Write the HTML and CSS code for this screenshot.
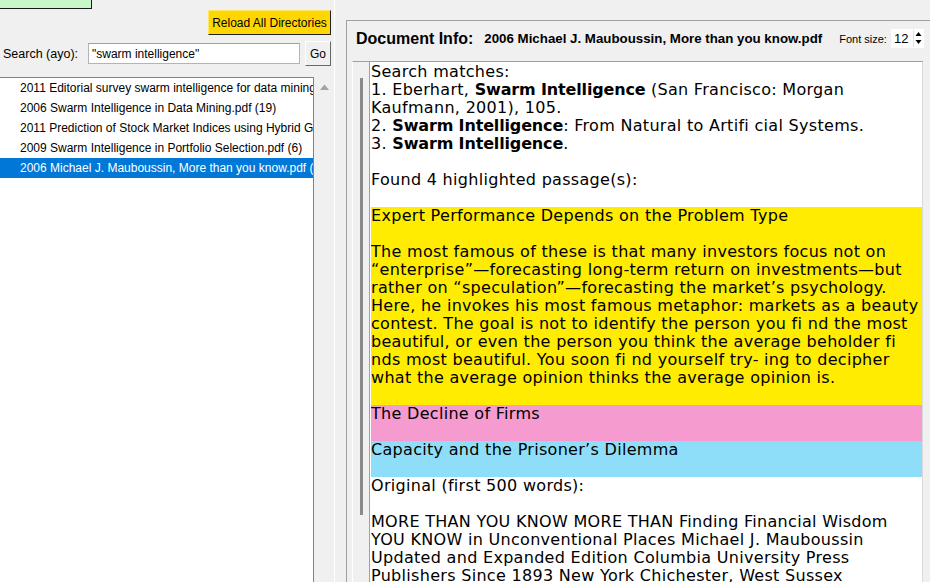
FILE: index.html
```html
<!DOCTYPE html>
<html lang="en">
<head>
  <meta charset="UTF-8">
  <title>PDF Highlight Browser</title>
  <link rel="stylesheet" href="styles.css">
</head>
<body>
  <div class="app">

    <!-- Left: directories + search + file list -->
    <div class="left">
      <div class="tree-btn"><span>Load tree</span></div>

      <div class="reload-row">
        <button class="reload-btn">Reload All Directories</button>
      </div>

      <div class="search-row">
        <label class="search-label">Search (ayo):</label>
        <input class="search-input" type="text" value="&quot;swarm intelligence&quot;">
        <button class="go-btn">Go</button>
      </div>

      <div class="list-wrap">
        <ul class="file-list">
          <li>2011 Editorial survey swarm intelligence for data mining.pdf (4)</li>
          <li>2006 Swarm Intelligence in Data Mining.pdf (19)</li>
          <li>2011 Prediction of Stock Market Indices using Hybrid Genetic Algorithm.pdf (2)</li>
          <li>2009 Swarm Intelligence in Portfolio Selection.pdf (6)</li>
          <li class="selected">2006 Michael J. Mauboussin, More than you know.pdf (3)</li>
        </ul>
        <div class="list-scroll">
          <svg width="9" height="6" viewBox="0 0 9 6"><polygon points="0,6 4.5,0.5 9,6" fill="#a3a3a3"/></svg>
        </div>
      </div>
    </div>

    <div class="sash"></div>

    <!-- Right: document info -->
    <div class="right">
      <div class="group">
        <div class="doc-header">
          <span class="doc-title">Document Info:</span>
          <span class="doc-name">2006 Michael J. Mauboussin, More than you know.pdf</span>
          <span class="font-label">Font size:</span>
          <div class="spin">
            <span class="spin-value">12</span>
            <div class="spin-arrows">
              <svg width="9" height="8" viewBox="0 0 9 8"><polygon points="1.5,6 4.5,2 7.5,6" fill="#000"/></svg>
              <svg width="9" height="8" viewBox="0 0 9 8"><polygon points="1.5,2 4.5,6 7.5,2" fill="#000"/></svg>
            </div>
          </div>
        </div>

        <div class="text-frame">
          <div class="track"><div class="thumb"></div></div>
          <div class="text">
            <div class="ln">Search matches:</div>
            <div class="ln">1. Eberhart, <b>Swarm Intelligence</b> (San Francisco: Morgan</div>
            <div class="ln">Kaufmann, 2001), 105.</div>
            <div class="ln">2. <b>Swarm Intelligence</b>: From Natural to Artifi cial Systems.</div>
            <div class="ln">3. <b>Swarm Intelligence</b>.</div>
            <div class="ln"></div>
            <div class="ln">Found 4 highlighted passage(s):</div>
            <div class="ln"></div>

            <div class="hl hl-yellow">
              <div class="ln">Expert Performance Depends on the Problem Type</div>
              <div class="ln"></div>
              <div class="ln">The most famous of these is that many investors focus not on</div>
              <div class="ln">“enterprise”—forecasting long-term return on investments—but</div>
              <div class="ln">rather on “speculation”—forecasting the market’s psychology.</div>
              <div class="ln">Here, he invokes his most famous metaphor: markets as a beauty</div>
              <div class="ln">contest. The goal is not to identify the person you fi nd the most</div>
              <div class="ln">beautiful, or even the person you think the average beholder fi</div>
              <div class="ln">nds most beautiful. You soon fi nd yourself try- ing to decipher</div>
              <div class="ln">what the average opinion thinks the average opinion is.</div>
              <div class="ln"></div>
            </div>
            <div class="hl hl-pink">
              <div class="ln">The Decline of Firms</div>
              <div class="ln"></div>
            </div>
            <div class="hl hl-blue">
              <div class="ln">Capacity and the Prisoner’s Dilemma</div>
              <div class="ln"></div>
            </div>

            <div class="ln">Original (first 500 words):</div>
            <div class="ln"></div>
            <div class="ln">MORE THAN YOU KNOW MORE THAN Finding Financial Wisdom</div>
            <div class="ln">YOU KNOW in Unconventional Places Michael J. Mauboussin</div>
            <div class="ln">Updated and Expanded Edition Columbia University Press</div>
            <div class="ln">Publishers Since 1893 New York Chichester, West Sussex</div>
          </div>
        </div>
      </div>
    </div>

  </div>
</body>
</html>
```

FILE: styles.css
```css
body {
  margin: 0;
  width: 930px;
  height: 582px;
  overflow: hidden;
  background-color: #f0f0f0;
  font-family: 'Liberation Sans', Arial, sans-serif;
  font-size: 12px;
  color: #000;
}
.app {
  display: flex;
  height: 582px;
}

/* left column */
.left {
  width: 334px;
  display: flex;
  flex-direction: column;
}
.tree-btn {
  width: 91px;
  height: 8px;
  flex-shrink: 0;
  background-color: #c8f8c8;
  border-right: 1px solid #1a1a1a;
  border-bottom: 1px solid #1a1a1a;
  overflow: hidden;
}
.tree-btn span {
  display: block;
  margin-top: -11px;
  line-height: 12px;
  text-align: center;
}
.reload-row {
  display: flex;
  justify-content: flex-end;
  padding-right: 3px;
  margin-top: 1px;
}
button {
  font-family: inherit;
  font-size: 12px;
  color: #000;
  padding: 0;
  cursor: pointer;
}
.reload-btn {
  width: 123px;
  height: 25px;
  background-color: #ffd700;
  border: 1px solid;
  border-color: #ffe866 #222 #222 #ffe866;
}
.search-row {
  display: flex;
  align-items: center;
  margin-top: 6px;
  height: 25px;
}
.search-label {
  width: 86px;
  padding-left: 3px;
  box-sizing: border-box;
  font-size: 12.5px;
}
.search-input {
  width: 212px;
  height: 21px;
  box-sizing: border-box;
  margin: 0 0 0 2px;
  padding: 0 3px;
  border: 1px solid #b4b4b4;
  border-top-color: #a0a0a0;
  font-family: inherit;
  font-size: 12px;
  outline: none;
}
.go-btn {
  width: 26px;
  height: 25px;
  margin-left: 5px;
  background-color: #f0f0f0;
  border: 1px solid;
  border-color: #fff #696969 #696969 #fff;
}
.list-wrap {
  flex: 1;
  min-height: 0;
  display: flex;
  margin-top: 11px;
}
.file-list {
  list-style: none;
  margin: 0;
  padding: 0;
  width: 313px;
  background: #fff;
  border-top: 1px solid #828282;
  border-right: 1px solid #828282;
  overflow: hidden;
}
.file-list li {
  height: 20px;
  line-height: 20px;
  padding-left: 20px;
  white-space: nowrap;
}
.file-list li.selected {
  background-color: #0078d7;
  color: #fff;
}
.list-scroll {
  width: 20px;
  padding-top: 7px;
  display: flex;
  justify-content: center;
}
.list-scroll svg {
  display: block;
}

.sash {
  width: 11px;
  border-left: 1px solid #fff;
}

/* right column */
.right {
  flex: 1;
  padding-top: 20px;
}
.group {
  height: 562px;
  border-top: 1px solid #a0a0a0;
  border-left: 1px solid #a0a0a0;
  display: flex;
  flex-direction: column;
}
.doc-header {
  display: flex;
  align-items: center;
  flex-shrink: 0;
  height: 40px;
  box-sizing: border-box;
  padding: 0 0 5px 9px;
  white-space: nowrap;
}
.doc-title {
  font-size: 16px;
  font-weight: bold;
}
.doc-name {
  font-size: 13.3px;
  font-weight: bold;
  margin-left: 11px;
}
.font-label {
  font-size: 11px;
  margin-left: 17px;
}
.spin {
  display: flex;
  align-items: center;
  width: 33px;
  height: 19px;
  margin-left: 4px;
  background: #fff;
  font-size: 13px;
}
.spin-value {
  flex: 1;
  padding-left: 3px;
}
.spin-arrows {
  display: flex;
  flex-direction: column;
  width: 10px;
  height: 17px;
  border-left: 1px solid #e0e0e0;
}
.spin-arrows svg {
  display: block;
}

.text-frame {
  flex: 1;
  min-height: 0;
  display: flex;
  width: 571px;
  margin-left: 5px;
  box-sizing: border-box;
  border-top: 1px solid #a0a0a0;
  border-left: 1px solid #fff;
}
.track {
  width: 16px;
}
.thumb {
  width: 3px;
  height: 437px;
  margin: 16px 0 0 7px;
  background-color: #8a8a8a;
}
.text {
  flex: 1;
  background: #fff;
  border-left: 1px solid #a0a0a0;
  border-right: 1px solid #dadada;
  padding: 1px 0 0 1px;
  font-family: 'DejaVu Sans', Verdana, sans-serif;
  font-size: 16px;
  letter-spacing: 0.3px;
  color: #000;
  overflow: hidden;
}
.text b {
  letter-spacing: -0.15px;
}
.ln {
  height: 18px;
  line-height: 18px;
  white-space: pre;
  overflow: hidden;
}
.hl-yellow {
  background-color: #ffec00;
}
.hl-pink {
  background-color: #f59bcf;
}
.hl-blue {
  background-color: #8fdef9;
}
```
